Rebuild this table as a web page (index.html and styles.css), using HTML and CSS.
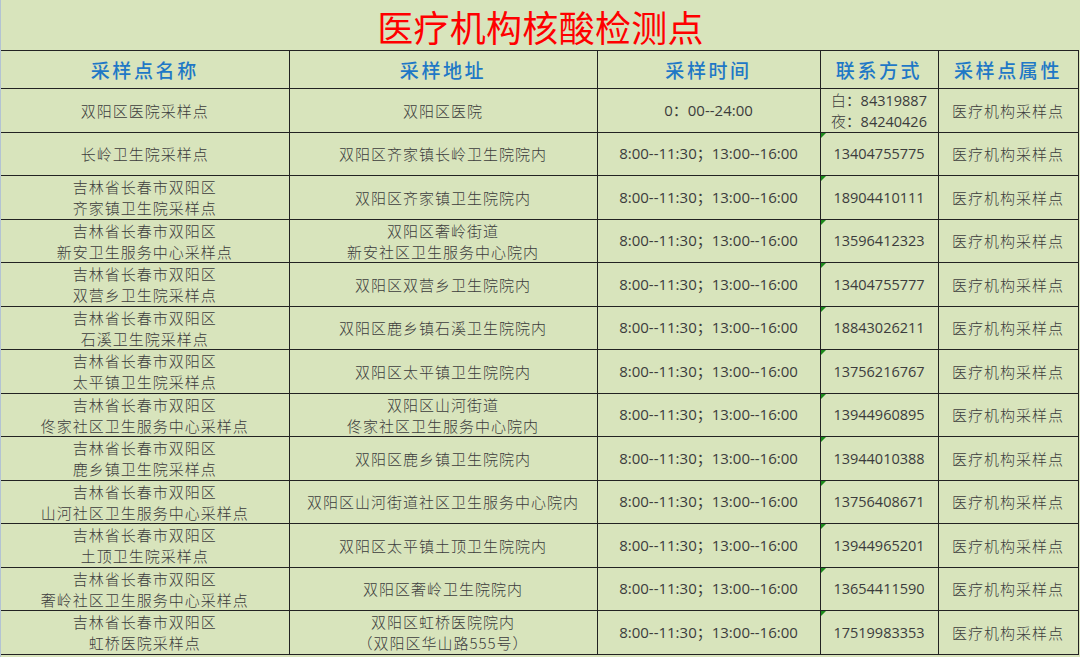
FILE: index.html
```html
<!DOCTYPE html>
<html lang="zh">
<head>
<meta charset="utf-8">
<title>医疗机构核酸检测点</title>
<link rel="stylesheet" href="styles.css">
</head>
<body>
<div class="page">
  <h1 class="title">医疗机构核酸检测点</h1>
  <table class="grid">
    <colgroup>
      <col class="c-name"><col class="c-addr"><col class="c-time"><col class="c-tel"><col class="c-type">
    </colgroup>
    <thead>
      <tr><th>采样点名称</th><th>采样地址</th><th>采样时间</th><th>联系方式</th><th>采样点属性</th></tr>
    </thead>
    <tbody>
      <tr><td class="cjk">双阳区医院采样点</td><td class="cjk">双阳区医院</td><td class="num">0：00--24:00</td><td class="num tel"><span class="line"><span class="lbl">白</span>：84319887</span><span class="line"><span class="lbl">夜</span>：84240426</span></td><td class="cjk">医疗机构采样点</td></tr>
      <tr><td class="cjk">长岭卫生院采样点</td><td class="cjk">双阳区齐家镇长岭卫生院院内</td><td class="num">8:00--11:30；13:00--16:00</td><td class="num tel mark">13404755775</td><td class="cjk">医疗机构采样点</td></tr>
      <tr><td class="cjk">吉林省长春市双阳区<br>齐家镇卫生院采样点</td><td class="cjk">双阳区齐家镇卫生院院内</td><td class="num">8:00--11:30；13:00--16:00</td><td class="num tel mark">18904410111</td><td class="cjk">医疗机构采样点</td></tr>
      <tr><td class="cjk">吉林省长春市双阳区<br>新安卫生服务中心采样点</td><td class="cjk">双阳区奢岭街道<br>新安社区卫生服务中心院内</td><td class="num">8:00--11:30；13:00--16:00</td><td class="num tel mark">13596412323</td><td class="cjk">医疗机构采样点</td></tr>
      <tr><td class="cjk">吉林省长春市双阳区<br>双营乡卫生院采样点</td><td class="cjk">双阳区双营乡卫生院院内</td><td class="num">8:00--11:30；13:00--16:00</td><td class="num tel mark">13404755777</td><td class="cjk">医疗机构采样点</td></tr>
      <tr><td class="cjk">吉林省长春市双阳区<br>石溪卫生院采样点</td><td class="cjk">双阳区鹿乡镇石溪卫生院院内</td><td class="num">8:00--11:30；13:00--16:00</td><td class="num tel mark">18843026211</td><td class="cjk">医疗机构采样点</td></tr>
      <tr><td class="cjk">吉林省长春市双阳区<br>太平镇卫生院采样点</td><td class="cjk">双阳区太平镇卫生院院内</td><td class="num">8:00--11:30；13:00--16:00</td><td class="num tel mark">13756216767</td><td class="cjk">医疗机构采样点</td></tr>
      <tr><td class="cjk">吉林省长春市双阳区<br>佟家社区卫生服务中心采样点</td><td class="cjk">双阳区山河街道<br>佟家社区卫生服务中心院内</td><td class="num">8:00--11:30；13:00--16:00</td><td class="num tel mark">13944960895</td><td class="cjk">医疗机构采样点</td></tr>
      <tr><td class="cjk">吉林省长春市双阳区<br>鹿乡镇卫生院采样点</td><td class="cjk">双阳区鹿乡镇卫生院院内</td><td class="num">8:00--11:30；13:00--16:00</td><td class="num tel mark">13944010388</td><td class="cjk">医疗机构采样点</td></tr>
      <tr><td class="cjk">吉林省长春市双阳区<br>山河社区卫生服务中心采样点</td><td class="cjk">双阳区山河街道社区卫生服务中心院内</td><td class="num">8:00--11:30；13:00--16:00</td><td class="num tel mark">13756408671</td><td class="cjk">医疗机构采样点</td></tr>
      <tr><td class="cjk">吉林省长春市双阳区<br>土顶卫生院采样点</td><td class="cjk">双阳区太平镇土顶卫生院院内</td><td class="num">8:00--11:30；13:00--16:00</td><td class="num tel mark">13944965201</td><td class="cjk">医疗机构采样点</td></tr>
      <tr><td class="cjk">吉林省长春市双阳区<br>奢岭社区卫生服务中心采样点</td><td class="cjk">双阳区奢岭卫生院院内</td><td class="num">8:00--11:30；13:00--16:00</td><td class="num tel mark">13654411590</td><td class="cjk">医疗机构采样点</td></tr>
      <tr><td class="cjk">吉林省长春市双阳区<br>虹桥医院采样点</td><td class="cjk">双阳区虹桥医院院内<br>（双阳区华山路555号）</td><td class="num">8:00--11:30；13:00--16:00</td><td class="num tel mark">17519983353</td><td class="cjk">医疗机构采样点</td></tr>
    </tbody>
  </table>
</div>
</body>
</html>
```

FILE: styles.css
```css
html, body {
  margin: 0;
  padding: 0;
}
body {
  background: #d8e4bc;
  width: 1080px;
  height: 657px;
  overflow: hidden;
}
.page {
  border-left: 1px solid #b3c3d3;
  height: 657px;
  box-sizing: border-box;
}
.title {
  margin: 0;
  height: 50px;
  line-height: 53px;
  text-align: center;
  font-family: "Noto Sans CJK SC", sans-serif;
  font-weight: 400;
  font-size: 36px;
  color: #ff0000;
  letter-spacing: 0.3px;
}
.grid {
  border-collapse: collapse;
  table-layout: fixed;
  width: 1077px;
}
.c-name { width: 288px; }
.c-addr { width: 308px; }
.c-time { width: 223px; }
.c-tel  { width: 118px; }
.c-type { width: 140px; }
.grid th,
.grid td {
  border: 1px solid #222;
  padding: 0;
  text-align: center;
  vertical-align: middle;
}
.grid tr > :first-child { border-left: none; }
.grid th {
  height: 37px;
  font-family: "Noto Sans CJK SC", sans-serif;
  font-weight: 500;
  font-size: 19px;
  letter-spacing: 2.6px;
  color: #1f78c6;
}
.grid td {
  height: 42.5px;
  line-height: 21px;
  color: #3c3c3c;
  overflow: hidden;
}
.cjk {
  font-family: "Noto Sans CJK SC", sans-serif;
  font-weight: 300;
  font-size: 15px;
  letter-spacing: 1px;
}
.num {
  font-family: "Open Sans", "Noto Sans CJK SC", sans-serif;
  font-size: 15px;
  color: #262626;
}
.tel {
  position: relative;
  font-size: 14.5px;
}
.line {
  display: block;
  height: 21px;
  line-height: 21px;
  overflow: hidden;
}
.lbl {
  font-family: "Noto Sans CJK SC", sans-serif;
  font-weight: 300;
  font-size: 15px;
  color: #3c3c3c;
}
.mark::before {
  content: "";
  position: absolute;
  left: 0;
  top: 0;
  width: 0;
  height: 0;
  border-top: 5px solid #1b8a1b;
  border-right: 5px solid transparent;
}
```
